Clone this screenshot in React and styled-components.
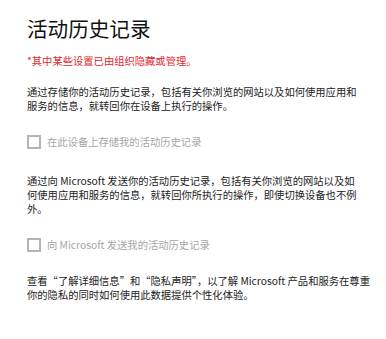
import React from "react";
import styled, { createGlobalStyle } from "styled-components";

const Global = createGlobalStyle`
  html, body { margin: 0; padding: 0; background: #fff; }
  body { font-family: "Noto Sans CJK SC", "Noto Sans", sans-serif; }
`;

const Page = styled.div`
  width: 386px;
  height: 339px;
  box-sizing: border-box;
  padding: 14px 0 0 27px;
  background: #fff;
  display: flex;
  flex-direction: column;
  overflow: hidden;
`;

const Title = styled.h1`
  margin: 0;
  font-size: 20.6px;
  line-height: 28px;
  font-weight: 400;
  color: #111;
  white-space: nowrap;
`;

const Notice = styled.p`
  margin: 12px 0 0;
  font-size: 10.3px;
  line-height: 14px;
  color: #e0282e;
  white-space: nowrap;
`;

const Paragraph = styled.p`
  margin: ${(p) => p.$top}px 0 0;
  font-size: 10.3px;
  line-height: 14px;
  color: #222;
  white-space: nowrap;
`;

const CheckRow = styled.label`
  margin-top: ${(p) => p.$top}px;
  display: flex;
  align-items: center;
  gap: 6px;
  color: #a6a6a6;
  font-size: 10.3px;
  line-height: 14px;
  white-space: nowrap;
`;

const Box = styled.span`
  width: 14px;
  height: 14px;
  box-sizing: border-box;
  border: 2px solid #b4b4b4;
  flex: none;
`;

export default function App() {
  return (
    <>
      <Global />
      <Page>
        <Title>活动历史记录</Title>
        <Notice>*其中某些设置已由组织隐藏或管理。</Notice>
        <Paragraph $top={17}>
          通过存储你的活动历史记录，包括有关你浏览的网站以及如何使用应用和
          <br />
          服务的信息，就转回你在设备上执行的操作。
        </Paragraph>
        <CheckRow $top={22}>
          <Box />
          在此设备上存储我的活动历史记录
        </CheckRow>
        <Paragraph $top={25}>
          通过向 Microsoft 发送你的活动历史记录，包括有关你浏览的网站以及如
          <br />
          何使用应用和服务的信息，就转回你所执行的操作，即使切换设备也不例
          <br />
          外。
        </Paragraph>
        <CheckRow $top={22}>
          <Box />
          向 Microsoft 发送我的活动历史记录
        </CheckRow>
        <Paragraph $top={22}>
          查看“了解详细信息”和“隐私声明”，以了解 Microsoft 产品和服务在尊重
          <br />
          你的隐私的同时如何使用此数据提供个性化体验。
        </Paragraph>
      </Page>
    </>
  );
}
